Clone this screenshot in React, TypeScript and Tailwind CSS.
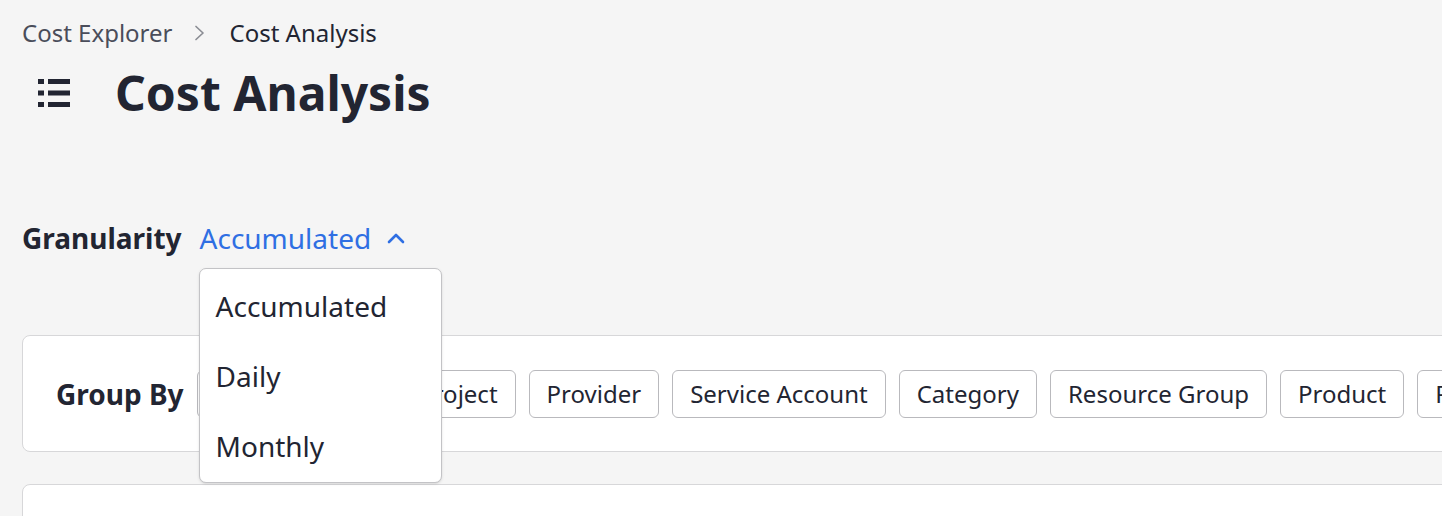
const groupBy = ['Project Group', 'Project', 'Provider', 'Service Account', 'Category', 'Resource Group', 'Product', 'Region', 'Type'];
const options = ['Accumulated', 'Daily', 'Monthly'];

function ListIcon() {
  return (
    <svg width="32" height="28" viewBox="0 0 32 28" fill="#222532">
      <rect x="0" y="0" width="6" height="5" />
      <rect x="10" y="0" width="22" height="5" />
      <rect x="0" y="11.5" width="6" height="5" />
      <rect x="10" y="11.5" width="22" height="5" />
      <rect x="0" y="23" width="6" height="5" />
      <rect x="10" y="23" width="22" height="5" />
    </svg>
  );
}

export default function App() {
  return (
    <div
      className="w-[1442px] h-[516px] overflow-hidden bg-[#f5f5f5] text-[#222532] pl-[22px]"
      style={{ fontFamily: '"Noto Sans", "Open Sans", sans-serif' }}
    >
      <nav className="flex items-center h-[32px] mt-[17px] text-[24px]">
        <span className="text-[#4a4d5a]">Cost Explorer</span>
        <svg width="12" height="16" viewBox="0 0 12 16" className="ml-[22px] mr-[23px]" fill="none" stroke="#8b8d94" strokeWidth="1.7" strokeLinecap="round" strokeLinejoin="round">
          <path d="M2 1.5 L9 8 L2 14.5" />
        </svg>
        <span>Cost Analysis</span>
      </nav>

      <div className="flex items-center h-[60px] mt-[14px]">
        <div className="w-[93px] pl-[16px] flex items-center">
          <ListIcon />
        </div>
        <h1 className="text-[48px] font-bold">Cost Analysis</h1>
      </div>

      <div className="flex items-center h-[40px] mt-[95px] text-[28px]">
        <span className="font-bold">Granularity</span>
        <div className="relative ml-[18px] h-[40px]">
          <button className="flex items-center h-[40px] text-[#2f6fe3]">
            Accumulated
            <svg width="20" height="12" viewBox="0 0 20 12" className="ml-[15px]" fill="none" stroke="#2f6fe3" strokeWidth="2.6" strokeLinecap="round" strokeLinejoin="round">
              <path d="M3 10 L10 3 L17 10" />
            </svg>
          </button>
          <div className="absolute z-10 left-[-1px] top-[50px] w-[243px] bg-white border border-[#c3c3c6] rounded-[7px] pt-[2px] pb-[1px] shadow-sm">
            {options.map((o) => (
              <div key={o} className="h-[70px] flex items-center px-[16px]">
                {o}
              </div>
            ))}
          </div>
        </div>
      </div>

      <div className="w-[1500px] h-[117px] mt-[77px] bg-white border border-[#d7d7d9] rounded-[8px] flex items-center pl-[33px]">
        <span className="shrink-0 whitespace-nowrap text-[28px] font-bold mr-[13px] mt-[1px]">Group By</span>
        <div className="flex gap-[13px]">
          {groupBy.map((g) => (
            <button
              key={g}
              className="shrink-0 h-[48px] px-[17px] border-[1.5px] border-[#b9b9bd] rounded-[6px] text-[24px] whitespace-nowrap flex items-center"
            >
              {g}
            </button>
          ))}
        </div>
      </div>

      <div className="w-[1500px] h-[80px] mt-[32px] bg-white border border-[#d7d7d9] rounded-[8px]" />
    </div>
  );
}
